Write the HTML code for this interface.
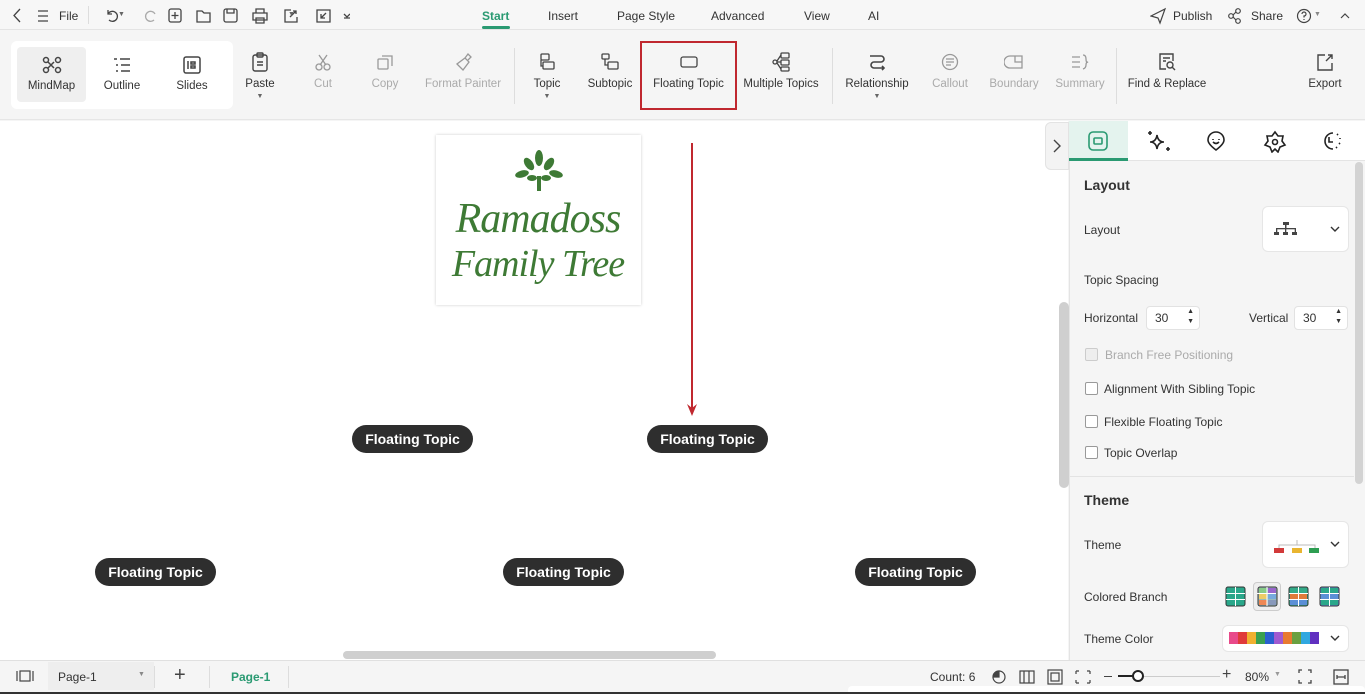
<!DOCTYPE html>
<html><head><meta charset="utf-8">
<style>
*{box-sizing:border-box;margin:0;padding:0}
body{width:1365px;height:694px;overflow:hidden;background:#f5f5f5;font-family:"Liberation Sans",Arial,sans-serif;font-size:12px;color:#333;position:relative}
.a{position:absolute}
.t{position:absolute;white-space:nowrap}
.g{color:#aaa}
.tb{position:absolute;text-align:center;font-size:11.5px;white-space:nowrap}
.tb svg{display:block;margin:0 auto 6px}
.ft{position:absolute;height:28px;background:#2e2e2e;color:#fff;font-weight:bold;font-size:14px;border-radius:14px;text-align:center;line-height:28px;width:121px}
.cb{position:absolute;width:13px;height:13px;border:1px solid #999;border-radius:2px;background:#fff}
.sp{position:absolute;width:54px;height:24px;background:#fff;border:1px solid #e2e2e2;border-radius:4px;padding-left:8px;line-height:22px}
</style></head><body>
<div class="a" style="left:0;top:0;width:1365px;height:30px;background:#f7f7f7;border-bottom:1px solid #e4e4e4"></div>
<svg class="a" style="left:10px;top:7px" width="340" height="18" fill="none" stroke="#444" stroke-width="1.3">
<path d="M10 2 L4 8.5 L10 15"/>
<path d="M28 4h10M28 9h10M28 14h10"/>
<path d="M98 7 a5 5 0 1 1 1 6 M98 3v4h4"/>
<path d="M145 7 a5 5 0 1 0 -1 6" stroke="#aaa"/>
<rect x="159" y="2" width="12" height="13" rx="2"/><path d="M165 5v7M161.5 8.5h7"/>
<path d="M187 4h5l2 2h6v9h-13z"/>
<rect x="214" y="2" width="13" height="13" rx="2"/><path d="M217 2v4h7v-4"/>
<path d="M243 6h14v7h-14zM246 6v-4h8v4M246 11h8v5h-8z"/>
<path d="M281 3h-6v12h12v-5M280 10l6-6M283 4h3v3"/>
<path d="M307 3h13v12h-13zM316 6l-5 5M311 7v4h4"/>
<path d="M334 7l3 3 3-3M334 11h6"/>
</svg>
<div class="t" style="left:59px;top:9px">File</div>
<div class="t" style="left:118px;top:11px;font-size:7px;color:#666">▼</div>
<div class="t" style="left:288px;top:11px;font-size:7px;color:#666">▼</div>
<div class="a" style="left:88px;top:6px;width:1px;height:18px;background:#ddd"></div>
<div class="t" style="left:482px;top:9px;color:#2a9a72;font-weight:bold">Start</div>
<div class="a" style="left:482px;top:26px;width:28px;height:3px;background:#2a9a72;border-radius:2px"></div>
<div class="t" style="left:548px;top:9px">Insert</div>
<div class="t" style="left:617px;top:9px">Page Style</div>
<div class="t" style="left:711px;top:9px">Advanced</div>
<div class="t" style="left:804px;top:9px">View</div>
<div class="t" style="left:868px;top:9px">AI</div>
<svg class="a" style="left:1150px;top:7px" width="200" height="18" fill="none" stroke="#444" stroke-width="1.2">
<path d="M1 9l14-7-5 14-2-5z"/>
<circle cx="81" cy="9" r="2.3"/><circle cx="88" cy="4" r="2.3"/><circle cx="88" cy="14" r="2.3"/><path d="M83 8l3-3M83 10l3 3"/>
<circle cx="154" cy="9" r="6.5"/><path d="M152 7a2 2 0 1 1 2 2v1.5M154 12v1"/>
<path d="M191 11l4-4 4 4"/>
</svg>
<div class="t" style="left:1173px;top:9px">Publish</div>
<div class="t" style="left:1251px;top:9px">Share</div>
<div class="t" style="left:1314px;top:11px;font-size:7px;color:#888">▼</div>

<div class="a" style="left:0;top:31px;width:1365px;height:89px;background:#f5f5f5;border-bottom:1px solid #e6e6e6"></div>
<div class="a" style="left:11px;top:41px;width:222px;height:68px;background:#fff;border-radius:6px"></div>
<div class="a" style="left:17px;top:47px;width:69px;height:55px;background:#efefef;border-radius:4px"></div>
<div class="tb" style="left:17px;top:56px;width:69px"><svg width="20" height="18" fill="none" stroke="#444" stroke-width="1.5"><circle cx="4" cy="4" r="2.5"/><circle cx="16" cy="4" r="2.5"/><circle cx="4" cy="14" r="2.5"/><circle cx="16" cy="14" r="2.5"/><path d="M6 6l3 3 3-3M6 12l3-3 3 3"/></svg>MindMap</div>
<div class="tb" style="left:92px;top:56px;width:60px"><svg width="20" height="18" fill="none" stroke="#444" stroke-width="1.4"><path d="M2 3h3M8 3h10M4 9h2M9 9h9M4 15h2M9 15h9"/></svg>Outline</div>
<div class="tb" style="left:162px;top:56px;width:60px"><svg width="20" height="18" fill="none" stroke="#444" stroke-width="1.5"><rect x="2" y="1" width="16" height="16" rx="2"/><path d="M6 5v8M9 6h4v2h-4zM9 10h4v2h-4z"/></svg>Slides</div>

<div class="tb" style="left:235px;top:52px;width:50px"><svg width="20" height="20" fill="none" stroke="#444" stroke-width="1.4"><rect x="3" y="3" width="14" height="16" rx="2"/><rect x="7" y="1" width="6" height="4" rx="1"/><path d="M7 10h6M7 13h6"/></svg>Paste<div style="font-size:7px;color:#666;margin-top:3px">▼</div></div>
<div class="tb g" style="left:298px;top:52px;width:50px"><svg width="20" height="20" fill="none" stroke="#999" stroke-width="1.3"><circle cx="6" cy="15" r="3"/><circle cx="14" cy="15" r="3"/><path d="M6 3l7 10M14 3l-7 10"/></svg>Cut</div>
<div class="tb g" style="left:360px;top:52px;width:50px"><svg width="20" height="20" fill="none" stroke="#999" stroke-width="1.3"><rect x="3" y="7" width="10" height="10" rx="1"/><path d="M7 4h10v10"/></svg>Copy</div>
<div class="tb g" style="left:420px;top:52px;width:86px"><svg width="20" height="20" fill="none" stroke="#999" stroke-width="1.3"><path d="M4 12l6 6 6-8-4-4z M12 6l3-4 3 3-3 3"/></svg>Format Painter</div>
<div class="a" style="left:514px;top:48px;width:1px;height:56px;background:#ddd"></div>
<div class="tb" style="left:522px;top:52px;width:50px"><svg width="20" height="20" fill="none" stroke="#444" stroke-width="1.3"><rect x="4" y="2" width="8" height="6" rx="1"/><rect x="6" y="10" width="11" height="7" rx="1"/><path d="M4 8v6h2"/></svg>Topic<div style="font-size:7px;color:#666;margin-top:3px">▼</div></div>
<div class="tb" style="left:584px;top:52px;width:52px"><svg width="20" height="20" fill="none" stroke="#444" stroke-width="1.3"><rect x="2" y="2" width="7" height="5" rx="1"/><rect x="8" y="10" width="10" height="7" rx="1"/><path d="M5 7v6h3"/></svg>Subtopic</div>
<div class="a" style="left:640px;top:41px;width:97px;height:69px;border:2px solid #c0282f"></div>
<div class="tb" style="left:642px;top:52px;width:93px"><svg width="20" height="20" fill="none" stroke="#444" stroke-width="1.3"><rect x="2" y="5" width="16" height="10" rx="2"/></svg>Floating Topic</div>
<div class="tb" style="left:740px;top:52px;width:82px"><svg width="20" height="20" fill="none" stroke="#444" stroke-width="1.3"><rect x="10" y="1" width="8" height="5" rx="1"/><rect x="10" y="8" width="8" height="5" rx="1"/><rect x="10" y="15" width="8" height="4" rx="1"/><circle cx="4" cy="10" r="2"/><path d="M6 10h4M6 9l4-6M6 11l4 6"/></svg>Multiple Topics</div>
<div class="a" style="left:832px;top:48px;width:1px;height:56px;background:#ddd"></div>
<div class="tb" style="left:842px;top:52px;width:70px"><svg width="20" height="20" fill="none" stroke="#444" stroke-width="1.6"><path d="M3 4h11a3 3 0 0 1 0 6H7a3 3 0 0 0 0 6h10M15 14l2 2-2 2"/></svg>Relationship<div style="font-size:7px;color:#666;margin-top:3px">▼</div></div>
<div class="tb g" style="left:925px;top:52px;width:50px"><svg width="20" height="20" fill="none" stroke="#999" stroke-width="1.3"><circle cx="10" cy="10" r="7.5"/><path d="M6 7h8M6 10h8M6 13h5"/></svg>Callout</div>
<div class="tb g" style="left:985px;top:52px;width:58px"><svg width="20" height="20" fill="none" stroke="#999" stroke-width="1.3"><path d="M6 4h12v12H6a6 6 0 0 1 0-12zM11 4v6h7"/></svg>Boundary</div>
<div class="tb g" style="left:1052px;top:52px;width:56px"><svg width="20" height="20" fill="none" stroke="#999" stroke-width="1.3"><path d="M2 5h8M2 10h8M2 15h8M13 3q3 0 3 4t2 3q-2 0-2 3t-3 4"/></svg>Summary</div>
<div class="a" style="left:1116px;top:48px;width:1px;height:56px;background:#ddd"></div>
<div class="tb" style="left:1124px;top:52px;width:86px"><svg width="20" height="20" fill="none" stroke="#444" stroke-width="1.4"><path d="M9 17H3V2h13v7M6 6h7M6 9h3"/><circle cx="13" cy="13" r="3"/><path d="M15 15l3 3"/></svg>Find &amp; Replace</div>
<div class="tb" style="left:1300px;top:52px;width:50px"><svg width="20" height="20" fill="none" stroke="#444" stroke-width="1.4"><path d="M10 3H3v15h14v-7M11 9l6-6M13 3h4v4"/></svg>Export</div>

<div class="a" style="left:0;top:121px;width:1068px;height:539px;background:#fff"></div>
<div class="a" style="left:436px;top:135px;width:205px;height:170px;background:#fff;box-shadow:0 0 3px rgba(0,0,0,.2)"></div>
<svg class="a" style="left:512px;top:150px" width="54" height="55"><g fill="#3e7a35"><rect x="25" y="26" width="4" height="15"/><ellipse cx="27" cy="8" rx="4" ry="8"/><ellipse cx="17" cy="14" rx="4" ry="7" transform="rotate(-35 17 14)"/><ellipse cx="37" cy="14" rx="4" ry="7" transform="rotate(35 37 14)"/><ellipse cx="10" cy="24" rx="7" ry="3.5" transform="rotate(-15 10 24)"/><ellipse cx="44" cy="24" rx="7" ry="3.5" transform="rotate(15 44 24)"/><ellipse cx="20" cy="28" rx="5" ry="3"/><ellipse cx="34" cy="28" rx="5" ry="3"/></g></svg>
<div class="t" style="left:438px;top:197px;width:200px;text-align:center;font-family:'Liberation Serif',serif;font-style:italic;color:#3e7a35;font-size:42px;line-height:44px;letter-spacing:-1px">Ramadoss</div>
<div class="t" style="left:438px;top:242px;width:200px;text-align:center;font-family:'Liberation Serif',serif;font-style:italic;color:#3e7a35;font-size:38px;line-height:44px;letter-spacing:-1px">Family Tree</div>
<div class="a" style="left:691px;top:143px;width:2px;height:266px;background:#c0282f"></div>
<svg class="a" style="left:686px;top:402px" width="12" height="16"><path d="M1 2l5 12 5-12-5 4z" fill="#c0282f"/></svg>
<div class="ft" style="left:352px;top:425px">Floating Topic</div>
<div class="ft" style="left:647px;top:425px">Floating Topic</div>
<div class="ft" style="left:95px;top:558px">Floating Topic</div>
<div class="ft" style="left:503px;top:558px">Floating Topic</div>
<div class="ft" style="left:855px;top:558px">Floating Topic</div>
<div class="a" style="left:343px;top:651px;width:373px;height:8px;background:#cfcfcf;border-radius:4px"></div>
<div class="a" style="left:1059px;top:302px;width:10px;height:186px;background:#cfcfcf;border-radius:5px"></div>
<div class="a" style="left:1045px;top:122px;width:24px;height:48px;background:#f3f3f3;border:1px solid #e3e3e3;border-radius:6px 0 0 6px"></div>
<svg class="a" style="left:1051px;top:138px" width="12" height="16" fill="none" stroke="#444" stroke-width="1.4"><path d="M3 2l6 6-6 6"/></svg>

<div class="a" style="left:1069px;top:121px;width:296px;height:539px;background:#f5f5f5;border-left:1px solid #e4e4e4"></div>
<div class="a" style="left:1069px;top:121px;width:296px;height:40px;background:#fff;border-bottom:1px solid #e4e4e4"></div>
<div class="a" style="left:1069px;top:121px;width:59px;height:40px;background:#e4f3ee"></div>
<div class="a" style="left:1069px;top:158px;width:59px;height:3px;background:#2a9a72"></div>
<svg class="a" style="left:1086px;top:129px" width="260" height="24" fill="none" stroke="#222" stroke-width="1.6">
<rect x="3" y="3" width="18" height="18" rx="4" stroke="#2a9a72"/><rect x="8" y="9" width="8" height="6" rx="1" stroke="#2a9a72"/>
<path d="M71 6q1 7 7 7q-6 0-7 7q-1-7-7-7q6 0 7-7zM64 2v4M62 4h4M82 18v4M80 20h4"/>
<path d="M130 21q-8-6-8-10a8 8 0 0 1 16 0q0 4-8 10zM127 10v1M133 10v1M127 13q3 3 6 0"/>
<path d="M189 3l3 4 5 0-1 5 3 4-5 2-2 5-3-3-3 3-2-5-5-2 3-4-1-5 5 0z"/><circle cx="189" cy="13" r="2.5"/>
<path d="M247 4a8 8 0 1 0 0 16M243 8v5h4M251 5l1 1M254 9v1M254 14l-1 1M251 18l-1 1"/>
</svg>
<div class="a" style="left:1355px;top:162px;width:8px;height:322px;background:#d3d3d3;border-radius:4px"></div>
<div class="t" style="left:1084px;top:177px;font-weight:bold;font-size:14px">Layout</div>
<div class="t" style="left:1084px;top:223px">Layout</div>
<div class="a" style="left:1262px;top:206px;width:87px;height:46px;background:#fff;border:1px solid #e6e6e6;border-radius:6px"></div>
<svg class="a" style="left:1274px;top:221px" width="24" height="16" fill="#444"><rect x="9" y="1" width="6" height="3"/><rect x="11" y="4" width="1.5" height="4"/><rect x="2" y="7" width="20" height="1.3"/><rect x="2" y="7" width="1.3" height="4"/><rect x="11" y="7" width="1.3" height="4"/><rect x="20.7" y="7" width="1.3" height="4"/><rect x="0" y="11" width="5" height="3"/><rect x="9" y="11" width="5" height="3"/><rect x="18" y="11" width="5" height="3"/></svg>
<svg class="a" style="left:1330px;top:225px" width="10" height="8" fill="none" stroke="#333" stroke-width="1.4"><path d="M1 2l4 4 4-4"/></svg>
<div class="t" style="left:1084px;top:273px">Topic Spacing</div>
<div class="t" style="left:1084px;top:311px">Horizontal</div>
<div class="sp" style="left:1146px;top:306px">30<span style="position:absolute;right:5px;top:0;font-size:7px;line-height:10px">▲<br>▼</span></div>
<div class="t" style="left:1249px;top:311px">Vertical</div>
<div class="sp" style="left:1294px;top:306px">30<span style="position:absolute;right:5px;top:0;font-size:7px;line-height:10px">▲<br>▼</span></div>
<div class="cb" style="left:1085px;top:348px;background:#eee;border-color:#ccc"></div>
<div class="t g" style="left:1105px;top:348px">Branch Free Positioning</div>
<div class="cb" style="left:1085px;top:382px"></div><div class="t" style="left:1104px;top:382px">Alignment With Sibling Topic</div>
<div class="cb" style="left:1085px;top:415px"></div><div class="t" style="left:1104px;top:415px">Flexible Floating Topic</div>
<div class="cb" style="left:1085px;top:446px"></div><div class="t" style="left:1104px;top:446px">Topic Overlap</div>
<div class="a" style="left:1070px;top:476px;width:284px;height:1px;background:#e3e3e3"></div>
<div class="t" style="left:1084px;top:492px;font-weight:bold;font-size:14px">Theme</div>
<div class="t" style="left:1084px;top:538px">Theme</div>
<div class="a" style="left:1262px;top:521px;width:87px;height:47px;background:#fff;border:1px solid #e6e6e6;border-radius:6px"></div>
<svg class="a" style="left:1272px;top:536px" width="50" height="20"><path d="M7 12v-3h36v3M25 9v-5" stroke="#bbb" fill="none"/><rect x="2" y="12" width="10" height="5" fill="#d23a3a"/><rect x="20" y="12" width="10" height="5" fill="#e9b530"/><rect x="37" y="12" width="10" height="5" fill="#2e9e52"/></svg>
<svg class="a" style="left:1330px;top:540px" width="10" height="8" fill="none" stroke="#333" stroke-width="1.4"><path d="M1 2l4 4 4-4"/></svg>
<div class="t" style="left:1084px;top:590px">Colored Branch</div>
<div class="a" style="left:1253px;top:582px;width:28px;height:29px;border:1px solid #ccc;border-radius:4px;background:#eee"></div>
<svg class="a" style="left:1225px;top:586px" width="120" height="21">
<g stroke="#333" stroke-width="1"><rect x="1" y="1" width="19" height="19" rx="2" fill="#2aa78a"/><rect x="33" y="1" width="19" height="19" rx="2" fill="#9bb"/><rect x="64" y="1" width="19" height="19" rx="2" fill="#3a8"/><rect x="95" y="1" width="19" height="19" rx="2" fill="#5b8fd6"/></g>
<rect x="34" y="2" width="8" height="5" fill="#8c8"/><rect x="43" y="2" width="8" height="5" fill="#96c"/><rect x="34" y="8" width="8" height="5" fill="#ec6"/><rect x="43" y="8" width="8" height="5" fill="#7ad"/><rect x="34" y="14" width="8" height="5" fill="#e85"/><rect x="43" y="14" width="8" height="5" fill="#89b"/>
<rect x="65" y="8" width="17" height="5" fill="#e07a3a"/><rect x="65" y="14" width="17" height="5" fill="#5b8fd6"/><rect x="96" y="2" width="17" height="5" fill="#2aa78a"/><rect x="96" y="14" width="17" height="5" fill="#2aa78a"/>
<path d="M1 7.5h19M1 13.5h19M10.5 1v19M32 7.5h19M42 1v19M64 7.5h19M64 13.5h19M73.5 1v19M95 7.5h19M95 13.5h19M104.5 1v19" stroke="#fff" stroke-width="1"/>
</svg>
<div class="t" style="left:1084px;top:632px">Theme Color</div>
<div class="a" style="left:1222px;top:625px;width:127px;height:27px;background:#fff;border:1px solid #e6e6e6;border-radius:6px"></div>
<svg class="a" style="left:1229px;top:632px" width="95" height="12"><rect x="0" width="9" height="12" fill="#e84a8a"/><rect x="9" width="9" height="12" fill="#e03a3a"/><rect x="18" width="9" height="12" fill="#f0b030"/><rect x="27" width="9" height="12" fill="#3aa050"/><rect x="36" width="9" height="12" fill="#2a60d0"/><rect x="45" width="9" height="12" fill="#a05ad0"/><rect x="54" width="9" height="12" fill="#e87a30"/><rect x="63" width="9" height="12" fill="#6aa040"/><rect x="72" width="9" height="12" fill="#30a8e0"/><rect x="81" width="9" height="12" fill="#6030c0"/></svg>
<svg class="a" style="left:1330px;top:634px" width="10" height="8" fill="none" stroke="#333" stroke-width="1.4"><path d="M1 2l4 4 4-4"/></svg>

<div class="a" style="left:0;top:660px;width:1365px;height:34px;background:#f5f5f5;border-top:1px solid #e0e0e0"></div>
<div class="a" style="left:48px;top:662px;width:106px;height:28px;background:#eee"></div>
<svg class="a" style="left:16px;top:670px" width="18" height="12" fill="none" stroke="#444" stroke-width="1.2"><path d="M1 1v10M17 1v10"/><rect x="4" y="1" width="10" height="10"/></svg>
<div class="t" style="left:58px;top:670px">Page-1</div>
<div class="t" style="left:138px;top:671px;font-size:7px;color:#888">▼</div>
<div class="a" style="left:154px;top:666px;width:1px;height:22px;background:#ddd"></div>
<div class="t" style="left:174px;top:664px;font-size:20px;color:#444;font-weight:300">+</div>
<div class="a" style="left:209px;top:666px;width:1px;height:22px;background:#ddd"></div>
<div class="t" style="left:231px;top:670px;color:#2a9a72;font-weight:bold">Page-1</div>
<div class="a" style="left:288px;top:666px;width:1px;height:22px;background:#ddd"></div>
<div class="t" style="left:930px;top:670px">Count: 6</div>
<svg class="a" style="left:991px;top:668px" width="100" height="18" fill="none" stroke="#444" stroke-width="1.2">
<circle cx="8" cy="9" r="6"/><path d="M8 3a6 6 0 0 0 -6 6h6z" fill="#444"/>
<rect x="29" y="3" width="14" height="12"/><path d="M33 3v12M38 3v12"/>
<rect x="57" y="2" width="14" height="14"/><rect x="60" y="5" width="8" height="8"/>
<path d="M85 3h3M85 3v3M99 3h-3M99 3v3M85 15h3M85 15v-3M99 15h-3M99 15v-3"/>
</svg>
<div class="a" style="left:1104px;top:676px;width:8px;height:1px;background:#444"></div>
<div class="a" style="left:1118px;top:675px;width:20px;height:2px;background:#222"></div>
<div class="a" style="left:1138px;top:676px;width:82px;height:1px;background:#ccc"></div>
<div class="a" style="left:1132px;top:670px;width:12px;height:12px;border:2px solid #222;border-radius:50%;background:#fff"></div>
<div class="t" style="left:1222px;top:666px;font-size:16px;color:#444">+</div>
<div class="t" style="left:1245px;top:670px">80%</div>
<div class="t" style="left:1274px;top:671px;font-size:7px;color:#999">▼</div>
<svg class="a" style="left:1297px;top:668px" width="60" height="18" fill="none" stroke="#444" stroke-width="1.3"><path d="M2 5V2h3M11 2h3v3M2 12v3h3M11 15h3v-3"/><rect x="37" y="2" width="14" height="14"/><path d="M40 9h8M40 7v4M48 7v4"/></svg>
<div class="a" style="left:0;top:692px;width:1365px;height:2px;background:#333"></div>
<div class="a" style="left:848px;top:686px;width:517px;height:6px;background:#fff;border-radius:4px 4px 0 0"></div>
</body></html>
